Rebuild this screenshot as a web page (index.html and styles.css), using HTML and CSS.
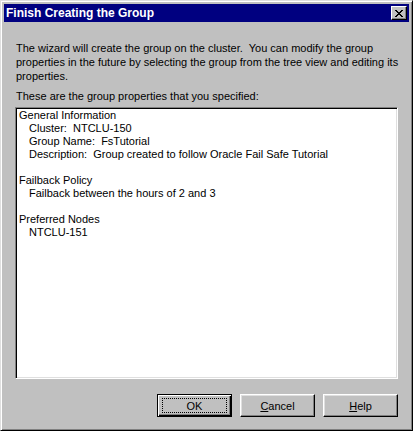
FILE: index.html
```html
<!DOCTYPE html>
<html lang="en">
<head>
    <meta charset="UTF-8">
    <title>Finish Creating the Group</title>
    <link rel="stylesheet" href="styles.css">
</head>
<body>
    <div class="window">
        <div class="titlebar">
            <span class="title">Finish Creating the Group</span>
            <button class="close-btn" aria-label="Close">
                <svg width="8" height="7" viewBox="0 0 8 7" shape-rendering="crispEdges">
                    <path d="M0 0h2v1h-2zM6 0h2v1h-2zM1 1h2v1h-2zM5 1h2v1h-2zM2 2h4v1h-4zM3 3h2v1h-2zM2 4h4v1h-4zM1 5h2v1h-2zM5 5h2v1h-2zM0 6h2v1h-2zM6 6h2v1h-2z" fill="#000"/>
                </svg>
            </button>
        </div>

        <div class="content">
            <p class="intro">The wizard will create the group on the cluster.&nbsp; You can modify the group properties in the future by selecting the group from the tree view and editing its properties.</p>

            <p class="label">These are the group properties that you specified:</p>

            <div class="summary">
                <div class="section">General Information</div>
                <div class="item">Cluster:&nbsp; NTCLU-150</div>
                <div class="item">Group Name:&nbsp; FsTutorial</div>
                <div class="item">Description:&nbsp; Group created to follow Oracle Fail Safe Tutorial</div>
                <div class="blank"></div>
                <div class="section">Failback Policy</div>
                <div class="item">Failback between the hours of 2 and 3</div>
                <div class="blank"></div>
                <div class="section">Preferred Nodes</div>
                <div class="item">NTCLU-151</div>
            </div>

            <div class="buttons">
                <button class="btn default"><span class="focus">OK</span></button>
                <button class="btn"><span><u>C</u>ancel</span></button>
                <button class="btn"><span><u>H</u>elp</span></button>
            </div>
        </div>
    </div>
</body>
</html>
```

FILE: styles.css
```css
* {
    box-sizing: border-box;
}

body {
    margin: 0;
    padding: 0;
    background-color: #c0c0c0;
    font-family: "Liberation Sans", Arial, sans-serif;
    font-size: 11px;
    color: #000;
}

.window {
    width: 413px;
    height: 431px;
    background-color: #c0c0c0;
    border: 1px solid;
    border-color: #dfdfdf #000 #000 #dfdfdf;
    box-shadow: inset 1px 1px #fff, inset -1px -1px #808080;
    padding: 3px;
    display: flex;
    flex-direction: column;
}

.titlebar {
    height: 18px;
    background-color: #000080;
    display: flex;
    align-items: center;
    justify-content: space-between;
    padding: 0 2px 0 2px;
}

.title {
    color: #fff;
    font-weight: bold;
    font-size: 12px;
}

.close-btn {
    width: 16px;
    height: 14px;
    padding: 0;
    margin: 0;
    background-color: #c0c0c0;
    border: 1px solid;
    border-color: #fff #000 #000 #fff;
    box-shadow: inset -1px -1px #808080;
    display: flex;
    align-items: center;
    justify-content: center;
}

.content {
    flex: 1;
    padding: 19px 11px 0 11px;
    display: flex;
    flex-direction: column;
}

.intro, .label {
    margin: 0 0 0 1px;
    line-height: 14px;
}

.intro {
    margin-right: -12px;
    margin-bottom: 6px;
}

.label {
    margin-bottom: 4px;
}

.summary {
    height: 272px;
    background-color: #fff;
    border: 1px solid;
    border-color: #808080 #fff #fff #808080;
    box-shadow: inset 1px 1px #000, inset -1px -1px #dfdfdf;
    padding: 1px 3px;
    line-height: 13px;
}

.item {
    padding-left: 10px;
}

.blank {
    height: 13px;
}

.buttons {
    display: flex;
    justify-content: flex-end;
    gap: 8px;
    margin-top: 15px;
}

.btn {
    width: 75px;
    height: 23px;
    padding: 0;
    margin: 0;
    background-color: #c0c0c0;
    font-family: "Liberation Sans", Arial, sans-serif;
    font-size: 11px;
    color: #000;
    border: 1px solid;
    border-color: #fff #000 #000 #fff;
    box-shadow: inset -1px -1px #808080, inset 1px 1px #dfdfdf;
    display: flex;
    align-items: center;
    justify-content: center;
}

.btn.default {
    border: 1px solid #000;
    box-shadow: inset 1px 1px #fff, inset -1px -1px #000, inset -2px -2px #808080;
}

.btn .focus {
    width: 65px;
    height: 15px;
    border: 1px dotted #000;
    display: flex;
    align-items: center;
    justify-content: center;
}
```
